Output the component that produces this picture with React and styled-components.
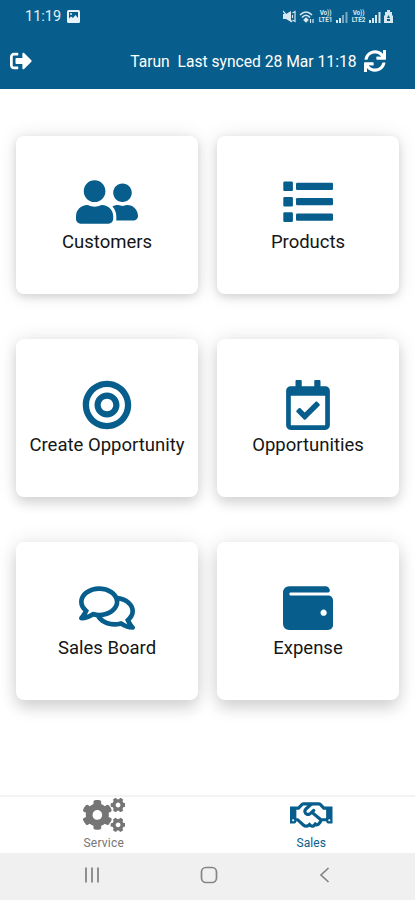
import React from 'react'
import styled, { createGlobalStyle } from 'styled-components'
import {
    FaUserFriends,
    FaBullseye,
    FaRegCalendarCheck,
    FaRegComments,
    FaWallet,
    FaCogs,
    FaRegHandshake,
    FaSignOutAlt,
    FaSync,
} from 'react-icons/fa'

const blue = '#075e8c';

const GlobalStyle = createGlobalStyle`
* {
box-sizing:border-box;
}
body {
margin:0;
background-color:white;
font-family:Roboto, "Liberation Sans", sans-serif;
}
`;

const Container = styled.div`
width:100%;
height:900px;
display:flex;
flex-direction:column;
overflow:hidden;
`;
const Header = styled.header`
height:88.5px;
flex:none;
color:white;
background-color:${blue};
`;
const StatusBar = styled.div`
height:32px;
padding:1px 22px 0 25px;
display:flex;
align-items:center;
`;
const Time = styled.span`
width:42px;
font-size:14.5px;
color:#e3eff5;
`;
const StatusIcons = styled.div`
margin-left:auto;
display:flex;
align-items:center;
gap:3px;
color:#d8e8f0;
`;
const Volte = styled.span`
width:15px;
display:flex;
flex-direction:column;
align-items:center;
font-size:6.4px;
line-height:7px;
font-weight:700;
letter-spacing:-0.1px;
`;
const AppBar = styled.div`
height:57px;
padding:1px 29px 0 10px;
display:flex;
align-items:center;
`;
const SyncInfo = styled.span`
margin-left:auto;
margin-right:7.5px;
padding-top:1px;
font-size:15.65px;
white-space:pre;
`;
const Grid = styled.main`
flex:1;
padding:47px 16px 0;
display:grid;
grid-template-columns:1fr 1fr;
grid-auto-rows:158.5px;
gap:44.5px 19px;
align-content:start;
`;
const Card = styled.div`
padding-top:3px;
display:flex;
flex-direction:column;
align-items:center;
justify-content:center;
border-radius:8px;
background-color:white;
color:${blue};
box-shadow:0 ${props => props.$depth}px ${props => props.$depth + 6}px rgba(0,0,0,0.13), 0 0 20px rgba(0,0,0,0.1);
`;
const IconBox = styled.div`
width:${props => props.$width}px;
height:${props => props.$height}px;
flex:none;

svg {
display:block;
width:100%;
height:100%;
}
`;
const Label = styled.span`
padding-top:2px;
font-size:18.5px;
line-height:26px;
color:#151515;
`;
const TabBar = styled.nav`
height:58px;
flex:none;
display:flex;
border-top:2px solid #f3f3f3;
`;
const Tab = styled.div`
flex:1;
padding-top:1px;
display:flex;
flex-direction:column;
align-items:center;
color:${props => props.$active ? blue : '#757575'};
`;
const TabLabel = styled.span`
font-size:12px;
line-height:14px;
margin-top:4px;
letter-spacing:${props => props.$spacing || 0}px;
`;
const SystemNav = styled.div`
height:47px;
flex:none;
padding:0 81px 3px 83px;
display:flex;
align-items:center;
justify-content:space-between;
background-color:#f0f0f0;
`;

const MuteIcon = () => (
    <svg width="13" height="13" viewBox="0 0 13 13" fill="currentColor">
        <path d="M0 4h3L8 1v11L3 9H0z" />
        <path d="M0 1l9 11M9.500 3l2.500-1.500v10L9.500 10M9.500 5v3" fill="none" stroke="currentColor" strokeWidth="1.2" />
    </svg>
)

const WifiIcon = () => (
    <svg width="16" height="14" viewBox="0 0 16 14" fill="none" stroke="currentColor" strokeWidth="1.6">
        <path d="M1 5Q7 -1 13 5M3 7.500Q7 3 11 7.500" />
        <path d="M7 8l2 2-2 2-2-2zM11.500 9v4M14 9v4" fill="currentColor" strokeWidth="1.2" />
    </svg>
)

const SignalIcon = ({ weak }) => (
    <svg width="12" height="13" viewBox="0 0 12 13" fill="currentColor">
        <path d="M0 10h2v3H0zM3 8h2v5H3z" />
        <path d="M6 5h2v8H6zM9.500 2h2v11h-2z" opacity={weak ? 0.55 : 1} />
    </svg>
)

const BatteryIcon = () => (
    <svg width="9" height="13" viewBox="0 0 9 13">
        <path d="M3 0h3v2h2v3l1 1v7H0V6l1-1V2h2z" fill="currentColor" />
        <path d="M3 8h3L4.500 5zM3 9h3v2H3z" fill={blue} />
    </svg>
)

const PictureIcon = () => (
    <svg width="13" height="13" viewBox="0 0 13 13">
        <rect width="13" height="13" rx="1.500" fill="#e8f2f7" />
        <path d="M2 2h9v6L8.500 5 6 8 4 6.500 2 8.500z" fill={blue} />
        <circle cx="4" cy="4" r="1" fill="#e8f2f7" />
    </svg>
)

// wide bars with square bullets
const ListIcon = () => (
    <svg viewBox="0 0 50 50" fill="currentColor">
        {[4.5, 19.9, 35.3].map(y => (
            <g key={y}>
                <rect x="0.300" y={y} width="9.600" height="9.600" rx="1.200" />
                <rect x="13" y={y + 1.2} width="37" height="7.200" rx="1.200" />
            </g>
        ))}
    </svg>
)

const items = [
    { label: 'Customers', icon: FaUserFriends, width: 62, depth: 3 },
    { label: 'Products', icon: ListIcon, width: 50, depth: 3 },
    { label: 'Create Opportunity', icon: FaBullseye, width: 50, depth: 6 },
    { label: 'Opportunities', icon: FaRegCalendarCheck, width: 44, depth: 6 },
    { label: 'Sales Board', icon: FaRegComments, width: 56, depth: 9 },
    { label: 'Expense', icon: FaWallet, width: 50, depth: 9 },
]

const App = () => {
    return (
        <Container>
            <GlobalStyle />
            <Header>
                <StatusBar>
                    <Time>11:19</Time>
                    <PictureIcon />
                    <StatusIcons>
                        <MuteIcon />
                        <WifiIcon />
                        <Volte><span>Vo))</span><span>LTE1</span></Volte>
                        <SignalIcon weak />
                        <Volte><span>Vo))</span><span>LTE2</span></Volte>
                        <SignalIcon />
                        <BatteryIcon />
                    </StatusIcons>
                </StatusBar>
                <AppBar>
                    <FaSignOutAlt size={22} />
                    <SyncInfo>Tarun  Last synced 28 Mar 11:18</SyncInfo>
                    <FaSync size={22} />
                </AppBar>
            </Header>
            <Grid>
                {items.map(({ label, icon: Icon, width, depth }) => (
                    <Card key={label} $depth={depth}>
                        <IconBox $width={width} $height={50}>
                            <Icon />
                        </IconBox>
                        <Label>{label}</Label>
                    </Card>
                ))}
            </Grid>
            <TabBar>
                <Tab>
                    <IconBox $width={42.5} $height={34}>
                        <FaCogs />
                    </IconBox>
                    <TabLabel $spacing={0.2}>Service</TabLabel>
                </Tab>
                <Tab $active>
                    <IconBox $width={42.5} $height={34}>
                        <FaRegHandshake />
                    </IconBox>
                    <TabLabel $spacing={0.1}>Sales</TabLabel>
                </Tab>
            </TabBar>
            <SystemNav>
                <svg width="18" height="18" viewBox="0 0 18 18" stroke="#858585" strokeWidth="1.8">
                    <path d="M3 1.500v15M9 1.500v15M15 1.500v15" />
                </svg>
                <svg width="18" height="18" viewBox="0 0 18 18" fill="none" stroke="#858585" strokeWidth="1.7">
                    <rect x="1.500" y="1.500" width="15" height="15" rx="4.500" />
                </svg>
                <svg width="18" height="18" viewBox="0 0 18 18" fill="none" stroke="#858585" strokeWidth="1.7">
                    <path d="M12.500 2L5 9l7.500 7" />
                </svg>
            </SystemNav>
        </Container>
    )
}

export default App
